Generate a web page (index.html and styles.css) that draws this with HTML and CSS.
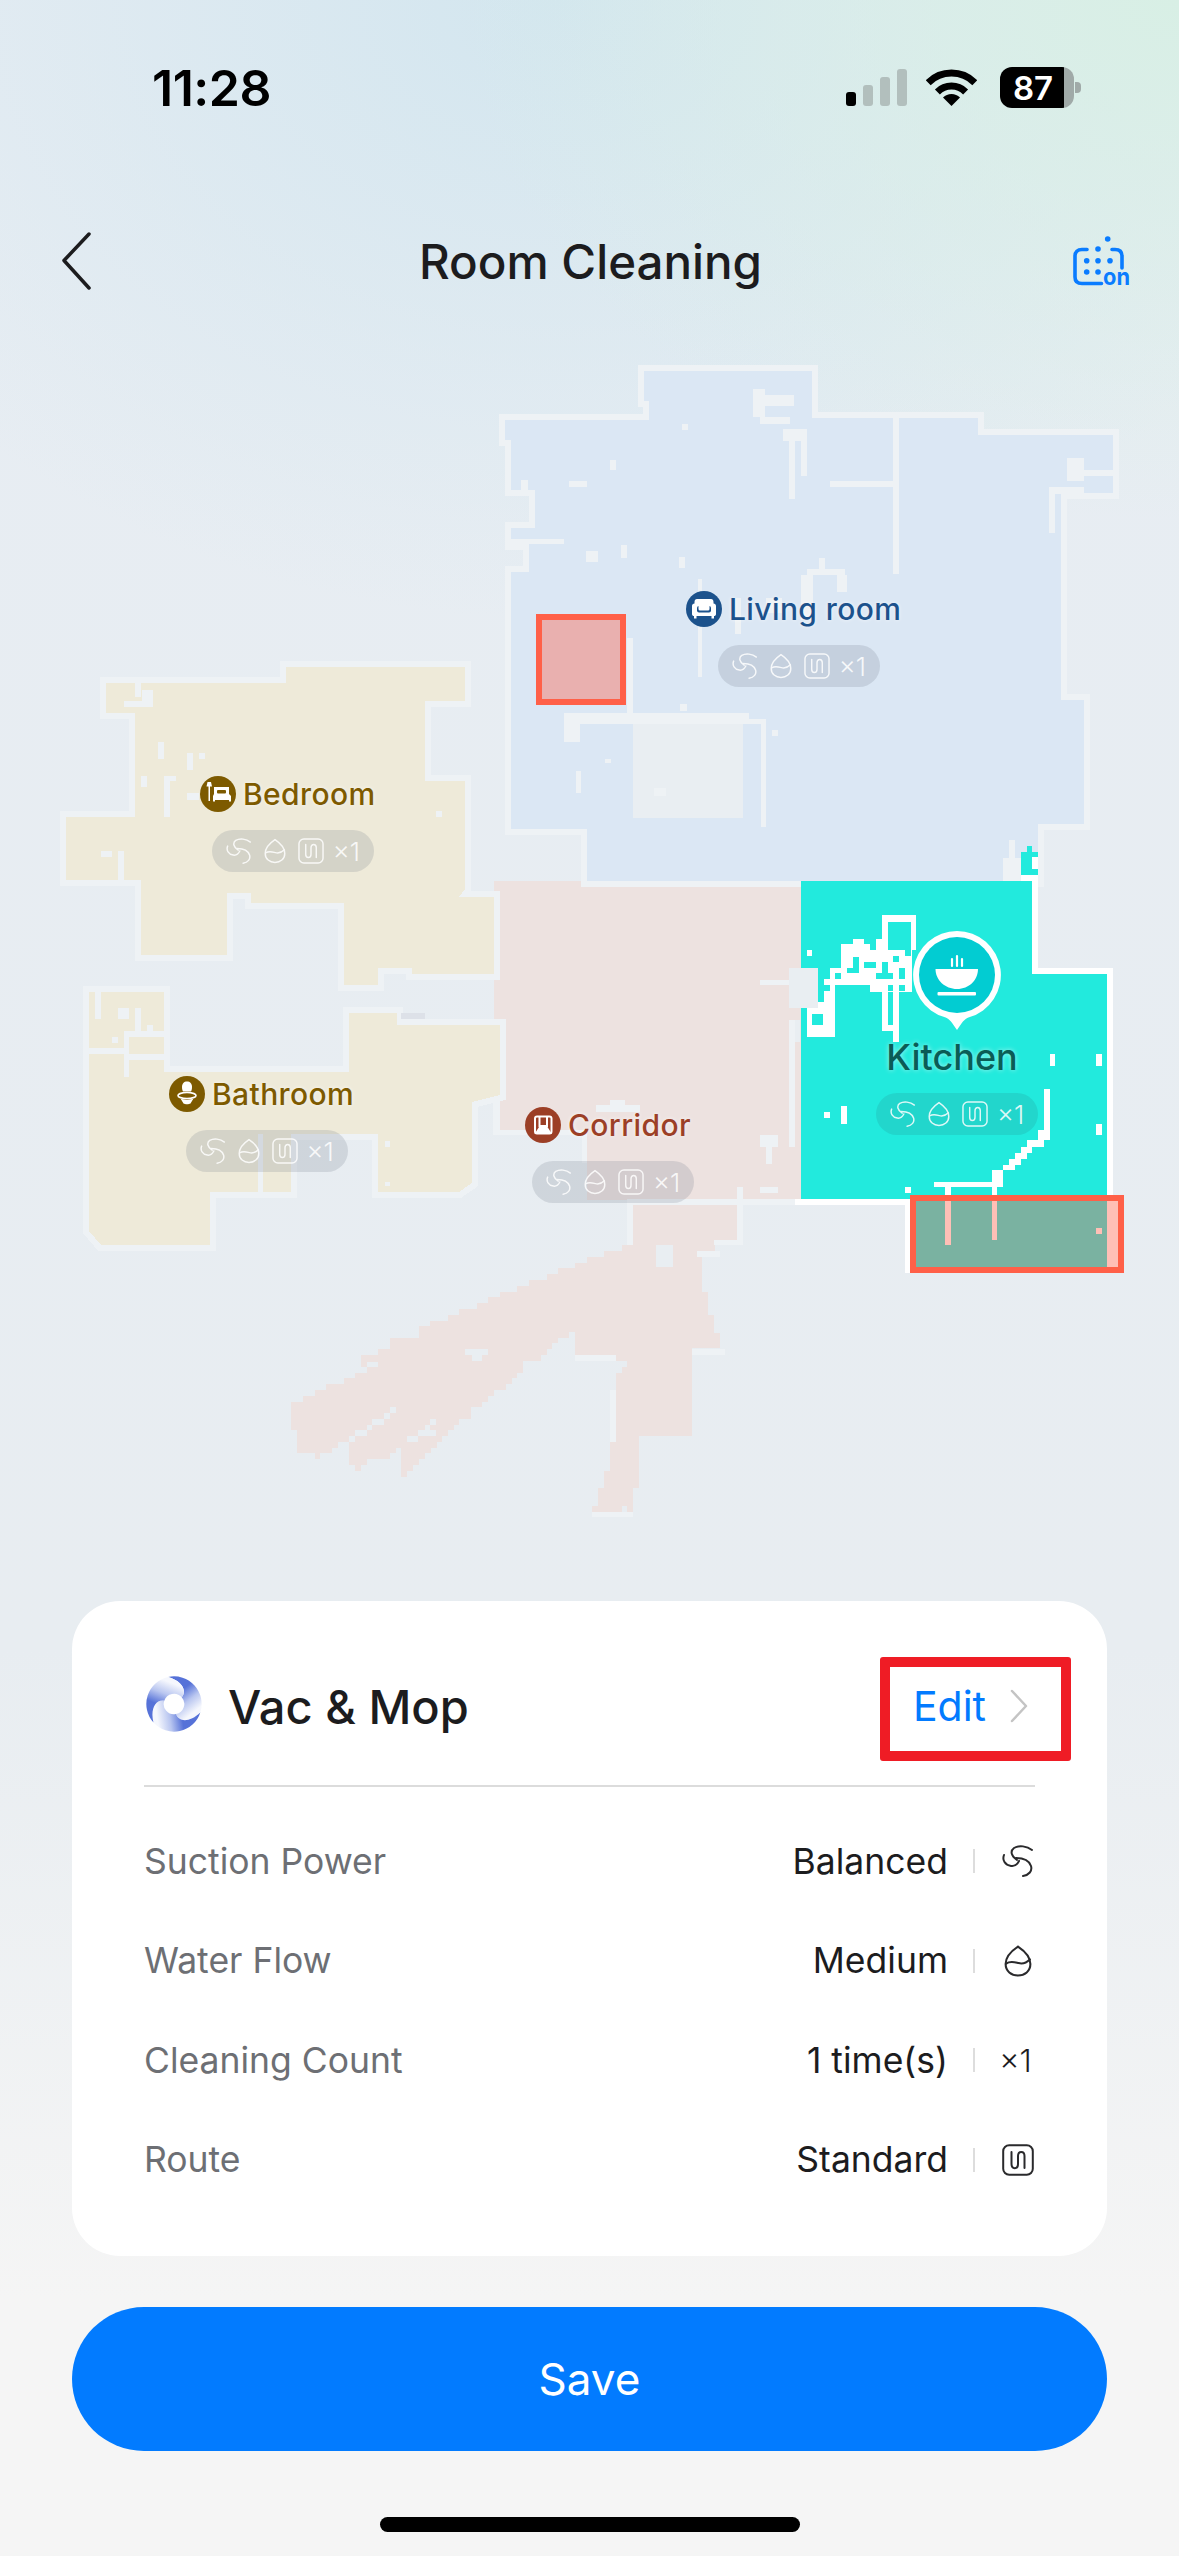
FILE: index.html
```html
<!DOCTYPE html>
<html lang="en">
<head>
  <meta charset="UTF-8">
  <meta name="viewport" content="width=device-width, initial-scale=1.0">
  <title>Room Cleaning</title>
  <link rel="stylesheet" href="styles.css">
</head>
<body>

  <!-- Shared icons -->
  <svg class="icon-defs" width="0" height="0">
    <symbol id="ico-fan" viewBox="0 0 32 32">
      <path d="M30 5C25 1 17 0 12 3C8 6 9 11 15 15"/>
      <path d="M2 10C0 15 3 20 9 21C12 21.5 15 20 17 16"/>
      <path d="M14 13C20 13 27 15 29 21C30.5 26 27 30 21 31"/>
    </symbol>
    <symbol id="ico-drop" viewBox="0 0 27 31">
      <path d="M13.5 1.5C9 4.5 1.5 10.5 1.5 18.5C1.5 25.5 7 29.5 13.5 29.5C20 29.5 25.5 25.5 25.5 18.5C25.5 10.5 18 4.5 13.5 1.5Z"/>
      <path d="M2 18C6 15 10 16.500 14 17.500C18 18.500 22 17 25 14"/>
    </symbol>
    <symbol id="ico-route" viewBox="0 0 32 32">
      <rect x="1.200" y="1.200" width="29.600" height="29.600" rx="6"/>
      <path d="M9.500 8V20C9.500 25.500 16 25.500 16 20V12C16 6.500 22.500 6.500 22.500 12V24"/>
    </symbol>
    <linearGradient id="bladeFade" gradientUnits="userSpaceOnUse" x1="10" y1="-16" x2="26" y2="4">
      <stop offset="0" stop-color="#5672d8"/>
      <stop offset="0.5" stop-color="#b9c6f0"/>
      <stop offset="1" stop-color="#f5f7fd"/>
    </linearGradient>
  </svg>

  <header class="status-bar">
    <span class="clock">11:28</span>
    <div class="status-icons">
      <div class="signal">
        <i class="bar bar-1 on"></i><i class="bar bar-2"></i><i class="bar bar-3"></i><i class="bar bar-4"></i>
      </div>
      <svg class="wifi" width="51" height="37" viewBox="0 0 51 37">
        <path d="M2.200 13.700A33 33 0 0 1 48.800 13.700M11.400 22.900A20 20 0 0 1 39.600 22.900" fill="none" stroke="#000" stroke-width="7"/>
        <path d="M25.500 37L17 28.500A12 12 0 0 1 34 28.500Z"/>
      </svg>
      <div class="battery"><span class="battery-level">87</span></div>
    </div>
  </header>

  <nav class="nav-bar">
    <svg class="back" width="30" height="58" viewBox="0 0 30 58">
      <path d="M28 2L3 28.500L28 56"/>
    </svg>
    <h1 class="nav-title">Room Cleaning</h1>
    <svg class="schedule" width="70" height="54" viewBox="0 0 70 54">
      <path class="schedule-line" d="M15 15.500H10C5.500 15.500 3 18 3 22V43C3 47 5.500 49.500 10 49.500H29.500M40 15.500H43C47.500 15.500 50 18 50 22V34"/>
      <g class="schedule-dots">
        <circle cx="35.700" cy="5" r="2.800"/><circle cx="26" cy="15" r="2.800"/>
        <circle cx="14.700" cy="26.700" r="2.800"/><circle cx="26" cy="26.700" r="2.800"/><circle cx="38" cy="26.700" r="2.800"/>
        <circle cx="14.700" cy="38" r="2.800"/><circle cx="26" cy="38" r="2.800"/>
      </g>
      <text class="schedule-on" x="31" y="51" textLength="27" lengthAdjust="spacingAndGlyphs">on</text>
    </svg>
  </nav>

  <section class="map">
    <svg class="floor" width="1179" height="1254" viewBox="0 347 1179 1254" shape-rendering="crispEdges">
      <path class="room-corridor" d="M737 1199V1240H715V1252H702V1292H708V1315H714V1333H720V1348H692V1436H639V1488H633V1512H627V1506H622V1512H592V1506H598V1488H604V1471H610V1442H616V1373H622V1367H627V1361H616V1357H575V1332H569V1338H558V1343H552V1349H547V1355H541V1361H523V1373H517V1378H512V1384H506V1390H494V1396H488V1402H482V1407H471V1419H459V1425H454V1430H448V1436H442V1442H437V1448H431V1453H425V1459H419V1465H413V1471H407V1477H401V1448H396V1453H390V1459H367V1465H361V1471H355V1465H349V1442H338V1448H332V1453H320V1459H315V1453H297V1430H291V1402H303V1396H315V1390H326V1384H344V1378H355V1373H367V1367H361V1355H378V1349H390V1338H419V1326H430V1321H448V1315H459V1309H477V1303H488V1297H500V1292H517V1286H529V1280H547V1274H558V1268H575V1263H587V1257H604V1251H622V1245H627V1200H587V1133H500V1030H494V881H801V1199Z"/>
      <path class="gaps" d="M390 1407H396V1413H390ZM384 1413H390V1419H384ZM372 1419H384V1425H372ZM367 1425H372V1430H367ZM355 1430H367V1436H355ZM349 1436H355V1442H349ZM430 1419H436V1425H430ZM425 1425H430V1430H425ZM418 1430H436V1436H418ZM407 1436H418V1442H407ZM656 1245H673V1267H656ZM465 1349H488V1355H465ZM472 1355H482V1361H472ZM367 1362H378V1367H367Z"/>
      <path class="walls" d="M760 980H795V985H760ZM789 1020H795V1147H789ZM760 1135H778V1147H760ZM766 1147H772V1164H766ZM760 1187H778V1193H760ZM737 1187H743V1243H737ZM627 1199H801V1205H627ZM714 1240H743V1245H714ZM697 1251H720V1257H697ZM575 1355H616V1361H575ZM610 1390H616V1442H610ZM692 1349H725V1355H692ZM592 1512H633V1517H592ZM493 1100H500V1133H493ZM493 1130H587V1135H493ZM582 1135H587V1163H582ZM627 1200H633V1245H627ZM610 1100H625V1112H610ZM596 1105H640V1112H596Z"/>

      <path class="room-dry" d="M106 683H286V667H465V701H425V781H465V889L459 897H494V974H412V968H378V985H344V903H251V893H227V955H141V880H66V817H135V713H106Z"/>
      <path class="room-dry" d="M89 992H164V1072H349V1013H397V1025H500V1095L472 1102V1183L459 1192H378V1134H291V1192H210V1245H101L89 1231Z"/>
      <path class="walls" d="M158 742H164V759H158ZM187 753H193V770H187ZM199 753H205V759H199ZM141 776H147V787H141ZM164 776H170V817H164ZM170 776H176V781H170ZM187 793H199V800H187ZM101 851H112V857H101ZM118 851H124V880H118ZM436 811H442V817H436ZM135 683H141V697H135ZM142 690H153V707H142ZM124 701H142V707H124ZM95 992H101V1019H95ZM118 1008H129V1019H118ZM135 1008H141V1031H135ZM147 1025H153V1031H147ZM124 1031H164V1037H124ZM124 1037H129V1077H124ZM89 1048H124V1054H89ZM129 1054H164V1060H129ZM112 1037H118V1043H112ZM385 1141H390V1147H385ZM385 1182H390V1186H385ZM258 1134H263V1193H258Z"/>
      <rect class="scuff" x="401" y="1013" width="24" height="6"/>

      <path class="room-living" d="M644 371H812V418H978V435H1113V493H1061V700H1084V824H1038V881H587V829H511V572H529V544H511V528H535V490H511V440H505V420H649V401H644Z"/>
      <rect class="gaps" x="633" y="719" width="110" height="99"/>
      <path class="walls" d="M893 417H899V574H893ZM830 481H893V487H830ZM789 429H795V499H789ZM783 429H807V441H783ZM801 441H807V476H801ZM753 389H765V417H753ZM765 395H794V406H765ZM760 417H790V424H760ZM1049 487H1055V533H1049ZM1049 487H1084V494H1049ZM1067 458H1084V481H1067ZM1084 470H1115V476H1084ZM1061 494H1067V700H1061ZM819 558H825V569H819ZM807 569H845V575H807ZM801 575H813V620H801ZM837 575H847V592H837ZM766 598H782V613H766ZM735 598H741V634H735ZM698 579H702V677H698ZM627 638H633V715H627ZM564 713H749V724H564ZM564 724H580V742H564ZM743 719H766V724H743ZM761 719H766V827H761ZM772 730H778V736H772ZM682 424H688V430H682ZM610 460H616V470H610ZM569 481H587V487H569ZM586 551H598V562H586ZM621 545H627V558H621ZM679 557H685V568H679ZM510 539H564V544H510ZM521 480H528V494H521ZM680 704H687V711H680ZM654 788H666V796H654ZM576 771H581V793H576ZM605 759H611V763H605Z"/>

      <path class="room-kitchen" d="M801 881H1032V968H1107V1273H916V1199H801Z"/>
      <path class="kitchen-walls" d="M882 915H916V922H882ZM882 915H888V950H882ZM911 915H916V950H911ZM841 944H870V985H841ZM853 939H864V944H853ZM876 939H888V950H876ZM899 944H916V950H899ZM870 950H912V992H870ZM830 968H841V985H830ZM824 979H835V1002H824ZM807 1002H835V1037H807ZM882 991H888V1031H882ZM893 991H899V1042H893ZM882 1025H899V1031H882ZM807 950H812V956H807ZM1050 1054H1055V1066H1050ZM1096 1054H1102V1066H1096ZM1096 1124H1102V1135H1096ZM841 1106H847V1124H841ZM824 1112H830V1118H824ZM1044 1089H1050V1140H1044ZM1038 1130H1050V1140H1038ZM1027 1140H1044V1147H1027ZM1021 1147H1032V1153H1021ZM1015 1153H1027V1159H1015ZM1009 1159H1021V1165H1009ZM1003 1165H1015V1170H1003ZM992 1170H1003V1187H992ZM934 1182H992V1187H934ZM945 1187H951V1245H945ZM992 1187H997V1240H992ZM905 1187H911V1193H905ZM1096 1228H1102V1234H1096ZM1107 1195H1118V1267H1107ZM1032 881H1038V974H1032ZM1032 968H1113V974H1032ZM1107 968H1113V1200H1107ZM795 1199H910V1205H795ZM905 1199H910V1273H905Z"/>
      <path class="room-kitchen" d="M864 962H876V968H864ZM882 962H888V973H882ZM876 973H893V979H876ZM853 957H859V968H853ZM847 968H859V973H847ZM835 973H841V979H835ZM893 956H899V962H893ZM899 968H905V979H899ZM888 985H893V991H888ZM899 985H905V991H899ZM905 950H911V956H905ZM824 985H830V991H824ZM812 1014H823V1025H812ZM888 922H911V950H888Z"/>
      <path class="gaps" d="M789 968H818V1008H789ZM795 1020H800V1042H795Z"/>
      <path class="walls" d="M1003 858H1021V881H1003ZM1009 840H1015V858H1009ZM1038 840H1044V881H1038Z"/>
      <path class="room-kitchen" d="M1021 852H1027V846H1032V852H1038V875H1021Z"/>
      <path class="kitchen-walls" d="M1032 857H1038V869H1032ZM1021 875H1038V881H1021Z"/>
    </svg>

    <!-- No-go zones sit on top of the rooms -->
    <div class="no-go no-go-living"></div>
    <div class="no-go no-go-kitchen"></div>

    <div class="room-tag tag-living">
      <div class="room-name">
        <svg class="room-icon" viewBox="0 0 36 36">
          <circle cx="18" cy="18" r="18" fill="currentColor"/>
          <path d="M11 8H25C26.500 8 27.500 9 27.500 11V12.500C29 12.500 30 13.500 30 15V23C30 24.500 29 25 28 25V27.500H25.500V25H10.500V27.500H8V25C7 25 6 24.500 6 23V15C6 13.500 7 12.500 8.500 12.500V11C8.500 9 9.500 8 11 8Z" fill="#fff"/>
          <rect x="11" y="15" width="14" height="6.500" rx="2" fill="currentColor"/>
          <rect x="12.500" y="14" width="11" height="5.500" rx="1.500" fill="#fff"/>
        </svg>
        Living room
      </div>
      <div class="chip">
        <svg class="chip-fan"><use href="#ico-fan"/></svg>
        <svg class="chip-drop"><use href="#ico-drop"/></svg>
        <svg class="chip-route"><use href="#ico-route"/></svg>
        <span class="chip-count">×1</span>
      </div>
    </div>

    <div class="room-tag tag-bedroom">
      <div class="room-name">
        <svg class="room-icon" viewBox="0 0 36 36">
          <circle cx="18" cy="18" r="18" fill="currentColor"/>
          <path d="M7.500 6H11L12 10.500H10V25H8.500V10.500H6.500Z" fill="#fff"/>
          <path d="M14 11H29V18L31 20V25.500H29V24H15V25.500H13V20L14 18Z" fill="#fff"/>
          <rect x="17" y="14" width="9" height="3.500" rx="1" fill="currentColor"/>
        </svg>
        Bedroom
      </div>
      <div class="chip">
        <svg class="chip-fan"><use href="#ico-fan"/></svg>
        <svg class="chip-drop"><use href="#ico-drop"/></svg>
        <svg class="chip-route"><use href="#ico-route"/></svg>
        <span class="chip-count">×1</span>
      </div>
    </div>

    <div class="room-tag tag-bathroom">
      <div class="room-name">
        <svg class="room-icon" viewBox="0 0 36 36">
          <circle cx="18" cy="18" r="18" fill="currentColor"/>
          <path d="M13 11C13 7.500 15 5.500 18 5.500C21 5.500 23 7.500 23 11C23 13 22.500 14.500 22 15.500H14C13.500 14.500 13 13 13 11Z" fill="#fff"/>
          <ellipse cx="18" cy="19.500" rx="9" ry="3" fill="none" stroke="#fff" stroke-width="1.600"/>
          <path d="M11.500 22.500C14 24 22 24 24.500 22.500L21.500 27.500C20 28.500 16 28.500 14.500 27.500Z" fill="#fff"/>
        </svg>
        Bathroom
      </div>
      <div class="chip">
        <svg class="chip-fan"><use href="#ico-fan"/></svg>
        <svg class="chip-drop"><use href="#ico-drop"/></svg>
        <svg class="chip-route"><use href="#ico-route"/></svg>
        <span class="chip-count">×1</span>
      </div>
    </div>

    <div class="room-tag tag-corridor">
      <div class="room-name">
        <svg class="room-icon" viewBox="0 0 36 36">
          <circle cx="18" cy="18" r="18" fill="currentColor"/>
          <rect x="10" y="9.500" width="16.500" height="17" rx="2" fill="none" stroke="#fff" stroke-width="2"/>
          <path d="M14.500 10V19H22V10" fill="none" stroke="#fff" stroke-width="2"/>
          <path d="M14 20H22.500L27 27H9.500Z" fill="#fff"/>
        </svg>
        Corridor
      </div>
      <div class="chip">
        <svg class="chip-fan"><use href="#ico-fan"/></svg>
        <svg class="chip-drop"><use href="#ico-drop"/></svg>
        <svg class="chip-route"><use href="#ico-route"/></svg>
        <span class="chip-count">×1</span>
      </div>
    </div>

    <div class="room-tag tag-kitchen">
      <svg class="kitchen-pin" width="94" height="106" viewBox="0 0 94 106">
        <path d="M47 3A44 44 0 0 1 59 89.300C54 91 52 95 47 102C42 95 40 91 35 89.300A44 44 0 0 1 47 3Z" fill="#fff"/>
        <circle cx="47" cy="47" r="38" fill="#02ccd2"/>
        <path d="M25.500 41H68C68 52 59 61 47 61C35 61 25.500 52 25.500 41Z" fill="#fff"/>
        <rect x="27.500" y="64" width="38.500" height="3.500" rx="1" fill="#fff"/>
        <path d="M42 31V38M47 28V38M52 31V38" fill="none" stroke="#fff" stroke-width="2.200" stroke-linecap="round"/>
      </svg>
      <div class="kitchen-name">Kitchen</div>
      <div class="chip chip-kitchen">
        <svg class="chip-fan"><use href="#ico-fan"/></svg>
        <svg class="chip-drop"><use href="#ico-drop"/></svg>
        <svg class="chip-route"><use href="#ico-route"/></svg>
        <span class="chip-count">×1</span>
      </div>
    </div>
  </section>

  <section class="card">
    <div class="card-head">
      <svg class="mode-logo" width="58" height="58" viewBox="-30 -30 60 60">
        <path id="blade" d="M-6 -28A28.600 28.600 0 0 1 27.200 8.800C16.800 18.900 5.100 19.100 2.060 10.430A10.600 10.600 0 0 0 8 -7C14 -14 8 -24 -6 -28Z" fill="url(#bladeFade)"/>
        <use href="#blade" transform="rotate(120)"/>
        <use href="#blade" transform="rotate(240)"/>
      </svg>
      <h2 class="mode-title">Vac &amp; Mop</h2>
      <a class="edit-link">Edit
        <svg class="edit-arrow" width="18" height="34" viewBox="0 0 18 34">
          <path d="M2 2L16 17L2 32"/>
        </svg>
      </a>
      <!-- Red box drawn over the screenshot -->
      <div class="edit-marker"></div>
    </div>

    <div class="setting-row">
      <span class="setting-label">Suction Power</span>
      <span class="setting-value">Balanced</span>
      <i class="setting-sep"></i>
      <span class="setting-icon"><svg class="row-fan"><use href="#ico-fan"/></svg></span>
    </div>
    <div class="setting-row">
      <span class="setting-label">Water Flow</span>
      <span class="setting-value">Medium</span>
      <i class="setting-sep"></i>
      <span class="setting-icon"><svg class="row-drop"><use href="#ico-drop"/></svg></span>
    </div>
    <div class="setting-row">
      <span class="setting-label">Cleaning Count</span>
      <span class="setting-value">1 time(s)</span>
      <i class="setting-sep"></i>
      <span class="setting-icon row-count">×1</span>
    </div>
    <div class="setting-row">
      <span class="setting-label">Route</span>
      <span class="setting-value">Standard</span>
      <i class="setting-sep"></i>
      <span class="setting-icon"><svg class="row-route"><use href="#ico-route"/></svg></span>
    </div>
  </section>

  <button class="save-button">Save</button>
  <div class="home-indicator"></div>

</body>
</html>
```

FILE: styles.css
```css
* {
  box-sizing: border-box;
}

html, body {
  margin: 0;
  padding: 0;
}

body {
  width: 1179px;
  height: 2556px;
  overflow: hidden;
  font-family: Inter, "Liberation Sans", sans-serif;
  color: #1c1c1e;
  background:
    radial-gradient(ellipse 720px 520px at 1179px 0, #d8efe5 0, rgba(216, 239, 229, 0) 100%),
    radial-gradient(ellipse 820px 620px at 560px 0, #d3e6ef 0, rgba(211, 230, 239, 0) 100%),
    linear-gradient(#e7edf3 0, #e8edf1 1650px, #f5f5f5 2300px);
}

.icon-defs {
  position: absolute;
}

/* Status bar */
.status-bar {
  height: 175px;
  display: flex;
  align-items: center;
  justify-content: space-between;
  padding: 0 105px 0 152px;
}

.clock {
  font-size: 50px;
  font-weight: 600;
  letter-spacing: -0.5px;
  color: #000;
}

.status-icons {
  display: flex;
  align-items: center;
  gap: 21px;
}

.signal {
  display: flex;
  align-items: flex-end;
  gap: 7px;
  height: 37px;
  margin-right: -2px;
}

.bar {
  width: 10px;
  border-radius: 3px;
  background-color: #b2bfbd;
}

.bar.on {
  background-color: #000;
}

.bar-1 { height: 14px; }
.bar-2 { height: 21px; }
.bar-3 { height: 29px; }
.bar-4 { height: 37px; }

.battery {
  position: relative;
  width: 74px;
  height: 41px;
  border-radius: 12px;
  background: linear-gradient(to right, #000 0, #000 87%, #a0aaa8 87%);
  display: flex;
  align-items: center;
  justify-content: center;
  margin-left: 2px;
}

.battery::after {
  content: "";
  position: absolute;
  right: -7px;
  top: 15px;
  width: 6px;
  height: 11px;
  border-radius: 0 4px 4px 0;
  background-color: #a0aaa8;
}

.battery-level {
  color: #fff;
  font-size: 33px;
  font-weight: 600;
  margin-right: 8px;
}

/* Nav bar */
.nav-bar {
  height: 172px;
  display: flex;
  align-items: center;
  justify-content: space-between;
  padding: 0 47px 0 61px;
}

.back path {
  fill: none;
  stroke: #1c1c1e;
  stroke-width: 3.5;
  stroke-linecap: round;
  stroke-linejoin: round;
}

.nav-title {
  margin: 0 0 0 18px;
  font-size: 47.5px;
  font-weight: 500;
}

.schedule {
  margin-right: -10px;
}

.schedule-line {
  fill: none;
  stroke: #0a7cff;
  stroke-width: 3.6;
  stroke-linecap: round;
}

.schedule-dots circle {
  fill: #0a7cff;
}

.schedule-on {
  font-size: 24px;
  font-weight: 700;
  fill: #0a7cff;
  stroke: none;
}

/* Map */
.map {
  position: relative;
  height: 1254px;
}

.floor {
  display: block;
}

.room-corridor {
  fill: #ede2e0;
}

.room-dry {
  fill: #eeead9;
  stroke: #eef2f5;
  stroke-width: 12;
  paint-order: stroke;
}

.room-living {
  fill: #dbe7f4;
  stroke: #eef2f5;
  stroke-width: 12;
  paint-order: stroke;
}

.room-kitchen {
  fill: #22eadd;
}

.walls {
  fill: #eef2f5;
}

.kitchen-walls {
  fill: #fff;
}

.gaps {
  fill: #e9eef2;
}

.scuff {
  fill: #dde1e8;
}

.no-go {
  position: absolute;
  border: 6px solid #ff6048;
  background-color: rgba(255, 96, 72, 0.4);
}

.no-go-living {
  left: 536px;
  top: 267px;
  width: 90px;
  height: 91px;
}

.no-go-kitchen {
  left: 910px;
  top: 848px;
  width: 214px;
  height: 78px;
}

.room-tag {
  position: absolute;
  display: flex;
  flex-direction: column;
  align-items: center;
}

.tag-living { left: 686px; top: 244px; }
.tag-bedroom { left: 200px; top: 429px; }
.tag-bathroom { left: 169px; top: 729px; }
.tag-corridor { left: 522px; top: 760px; }
.tag-kitchen { left: 876px; top: 581px; width: 162px; }

.room-name {
  display: flex;
  align-items: center;
  gap: 7px;
  height: 36px;
  margin-bottom: 18px;
  font-size: 30px;
  font-weight: 500;
  letter-spacing: 0.4px;
  white-space: nowrap;
  text-shadow: 0 0 4px rgba(255, 255, 255, 0.7);
}

.room-icon {
  width: 36px;
  height: 36px;
  flex: none;
}

.tag-living .room-name { color: #1c528c; }
.tag-bedroom .room-name, .tag-bathroom .room-name { color: #7d5a00; }
.tag-corridor .room-name { color: #9c3f26; }

.chip {
  display: flex;
  align-items: center;
  width: 162px;
  height: 42px;
  padding-left: 14px;
  border-radius: 21px;
  background-color: rgba(110, 120, 135, 0.2);
  margin-left: 10px;
}

.tag-corridor .chip {
  margin-left: 10px;
}

.chip svg {
  fill: none;
  stroke: #fff;
  stroke-width: 1.8;
  stroke-linecap: round;
  opacity: 0.85;
  flex: none;
}

.chip-fan { width: 26px; height: 26px; margin-right: 12px; }
.chip-drop { width: 22px; height: 26px; margin-right: 12px; }
.chip-route { width: 26px; height: 26px; margin-right: 9px; }

.chip-count {
  color: #fff;
  opacity: 0.85;
  font-size: 26px;
  font-weight: 300;
}

.kitchen-pin {
  display: block;
}

.kitchen-name {
  height: 44px;
  line-height: 44px;
  margin: 1px 10px 14px 0;
  font-size: 36px;
  font-weight: 500;
  color: #0a5c56;
  text-shadow: 0 0 5px rgba(255, 255, 255, 0.6);
}

.chip-kitchen {
  margin-left: 0;
  background-color: #22d6cc;
}

/* Settings card */
.card {
  width: 1035px;
  height: 655px;
  margin: 0 0 0 72px;
  padding: 0 72px;
  border-radius: 48px;
  background-color: #fff;
}

.card-head {
  position: relative;
  height: 186px;
  display: flex;
  align-items: center;
  border-bottom: 2px solid #dcdcdc;
  padding-top: 26px;
}

.mode-logo {
  margin: -4px 0 0 1px;
}

.mode-title {
  margin: 0 0 0 25px;
  font-size: 47px;
  font-weight: 500;
}

.edit-link {
  margin-left: auto;
  margin-right: 7px;
  display: flex;
  align-items: center;
  gap: 24px;
  font-size: 41px;
  color: #027bff;
}

.edit-arrow path {
  fill: none;
  stroke: #c4c4c4;
  stroke-width: 2.5;
  stroke-linecap: round;
  stroke-linejoin: round;
}

.edit-marker {
  position: absolute;
  left: 736px;
  top: 56px;
  width: 191px;
  height: 104px;
  border: 10px solid #ef1c25;
  border-radius: 3px;
}

.setting-row {
  display: flex;
  align-items: center;
  height: 99.5px;
  font-size: 35.5px;
}

.setting-row:nth-child(2) {
  margin-top: 24.5px;
}

.setting-label {
  flex: 1;
  color: #6d6f74;
}

.setting-sep {
  width: 2px;
  height: 24px;
  margin: 0 26px 0 25px;
  background-color: #dddddd;
}

.setting-icon {
  width: 33px;
  height: 33px;
  margin-right: 1px;
  display: flex;
  align-items: center;
  justify-content: center;
}

.setting-icon svg {
  width: 32px;
  height: 32px;
  fill: none;
  stroke: #2a2a2c;
  stroke-width: 2;
  stroke-linecap: round;
}

.row-count {
  padding-right: 4px;
  font-size: 31px;
  font-weight: 300;
}

/* Bottom */
.save-button {
  display: block;
  width: 1035px;
  height: 144px;
  margin: 51px 0 0 72px;
  border: none;
  border-radius: 72px;
  background-color: #027bff;
  color: #fff;
  font-family: inherit;
  font-size: 44px;
}

.home-indicator {
  width: 420px;
  height: 15px;
  margin: 66px 0 0 380px;
  border-radius: 8px;
  background-color: #000;
}
```
